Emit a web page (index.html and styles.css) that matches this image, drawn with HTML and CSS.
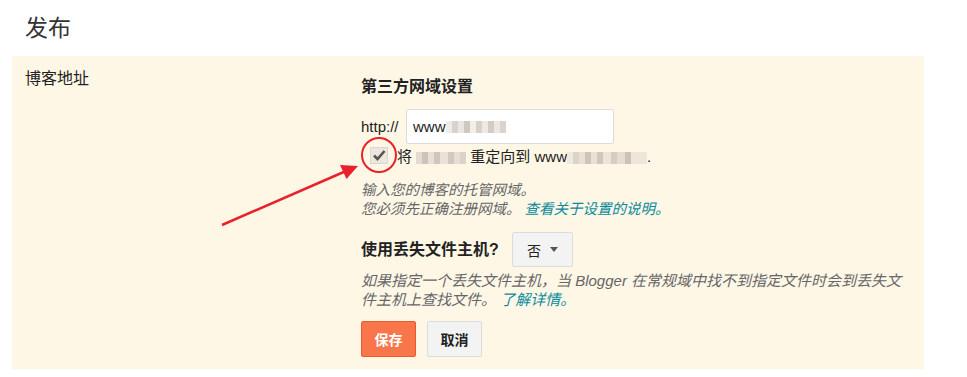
FILE: index.html
```html
<!DOCTYPE html>
<html>
<head>
<meta charset="utf-8">
<title>发布</title>
<link rel="stylesheet" href="styles.css">
</head>
<body>
<h1 class="title">发布</h1>
<div class="panel">
 <div class="label">博客地址</div>
 <div class="settings">
  <h2 class="heading">第三方网域设置</h2>
  <div class="url-row">
   <span class="proto">http://</span>
   <div class="url-input">www<span class="blur blur-a"></span></div>
  </div>
  <div class="check-row">
   <span class="checkbox"><svg width="14" height="12" viewBox="0 0 14 12"><path d="M2 6.5 L5.5 10 L12.5 2" fill="none" stroke="#555" stroke-width="2.6"/></svg></span>
   <span>将 <span class="blur blur-b"></span> 重定向到 www<span class="blur blur-c"></span>.</span>
  </div>
  <p class="help">输入您的博客的托管网域。<br>您必须先正确注册网域。 <a class="link" href="#">查看关于设置的说明。</a></p>
  <div class="missing-row">
   <h2 class="heading">使用丢失文件主机?</h2>
   <div class="select">否 <span class="caret"></span></div>
  </div>
  <p class="help desc">如果指定一个丢失文件主机，当 Blogger 在常规域中找不到指定文件时会到丢失文件主机上查找文件。 <a class="link" href="#">了解详情。</a></p>
  <div class="actions">
   <button class="btn btn-save">保存</button>
   <button class="btn btn-cancel">取消</button>
  </div>
 </div>
</div>
<svg class="marker" width="967" height="377" viewBox="0 0 967 377">
 <line x1="222" y1="225" x2="346" y2="171" stroke="#e8212a" stroke-width="2.5"/>
 <polygon points="358,166 346.5,179 340,165" fill="#e8212a"/>
 <circle cx="379" cy="155" r="17" fill="none" stroke="#e8212a" stroke-width="2"/>
</svg>
</body>
</html>
```

FILE: styles.css
```css
body {
 margin: 0;
 font-family: "Liberation Sans", "Noto Sans CJK SC", sans-serif;
 font-size: 14px;
 color: #222;
 position: relative;
}
.title {
 font-size: 23px;
 font-weight: normal;
 color: #333;
 margin: 0;
 padding: 13px 0 0 25px;
 height: 56px;
 line-height: 30px;
 box-sizing: border-box;
}
.panel {
 background: #fef7e6;
 margin-left: 12px;
 width: 912px;
 height: 313px;
 display: flex;
 box-sizing: border-box;
 padding: 13px 0 0 13px;
}
.label {
 width: 336px;
 font-size: 16px;
 line-height: 20px;
}
.settings {
 padding-top: 8px;
 width: 550px;
}
.heading {
 font-size: 16px;
 font-weight: bold;
 line-height: 20px;
 margin: 0;
 color: #222;
}
.url-row {
 display: flex;
 align-items: center;
 margin-top: 12px;
 height: 35px;
}
.proto {
 font-size: 15px;
 width: 45px;
}
.url-input {
 width: 208px;
 height: 35px;
 box-sizing: border-box;
 background: #fff;
 border: 1px solid #dcdcdc;
 border-radius: 2px;
 padding: 0 0 0 6px;
 font-size: 15px;
 line-height: 33px;
 display: flex;
 align-items: center;
}
.blur {
 display: inline-block;
 height: 12px;
 vertical-align: middle;
 background:
  linear-gradient(90deg, #f0ece8 0 6px, #d8d2cc 6px 12px, #ebe6e2 12px 18px, #cfc8c0 18px 24px, #f2eeea 24px 30px, #d9d0c6 30px 36px, #eee9e4 36px 42px, #d4ccc4 42px 48px, #ece7e2 48px 54px, #dcd4cc 54px 60px, #f0ece8 60px 80px);
}
.blur-a {
 width: 60px;
}
.blur-b {
 width: 50px;
 background:
  linear-gradient(90deg, #e4dcd2 0 6px, #cdc3b8 6px 12px, #e8e0d6 12px 18px, #d0c6bb 18px 24px, #eae2d8 24px 32px, #d2c8bd 32px 38px, #e6ded4 38px 44px, #dcd2c7 44px 50px);
}
.blur-c {
 width: 80px;
 background:
  linear-gradient(90deg, #efe8dc 0 6px, #ddd4c8 6px 12px, #e8e0d5 12px 18px, #cfc4b7 18px 24px, #e9e1d6 24px 30px, #d2c7ba 30px 36px, #ece4d9 36px 44px, #d6ccc0 44px 50px, #e6ddd2 50px 58px, #cdc2b5 58px 64px, #eee6db 64px 80px);
}
.check-row {
 display: flex;
 align-items: center;
 height: 20px;
 margin-top: 1px;
 font-size: 15px;
}
.checkbox {
 width: 18px;
 height: 17px;
 box-sizing: border-box;
 background: #ece7de;
 border: 1px solid #dcd6cc;
 margin: 0 9px 0 9px;
 display: flex;
 align-items: center;
 justify-content: center;
}
.help {
 margin: 16px 0 0 0;
 font-style: italic;
 color: #666;
 line-height: 19px;
 font-size: 14.5px;
}
.link {
 color: #0b8a9c;
 text-decoration: none;
}
.missing-row {
 display: flex;
 align-items: center;
 margin-top: 13px;
}
.missing-row .heading {
 width: 151px;
}
.select {
 width: 61px;
 height: 35px;
 box-sizing: border-box;
 background: #f3f3f3;
 border: 1px solid #dcdcdc;
 border-radius: 2px;
 display: flex;
 align-items: center;
 padding-left: 14px;
 font-size: 14px;
}
.caret {
 width: 0;
 height: 0;
 border-left: 4px solid transparent;
 border-right: 4px solid transparent;
 border-top: 5px solid #555;
 margin-left: 9px;
}
.desc {
 margin-top: 4px;
 font-size: 15px;
 width: 546px;
}
.actions {
 display: flex;
 gap: 11px;
 margin-top: 12px;
}
.btn {
 height: 36px;
 font-family: inherit;
 font-size: 14px;
 font-weight: bold;
 border-radius: 2px;
 padding: 0;
}
.btn-save {
 width: 55px;
 background: #f8764a;
 border: 1px solid #ea5a2c;
 color: #fff;
}
.btn-cancel {
 width: 55px;
 background: #f3f3f3;
 border: 1px solid #dcdcdc;
 color: #222;
}
.marker {
 position: absolute;
 left: 0;
 top: 0;
 pointer-events: none;
}
```
